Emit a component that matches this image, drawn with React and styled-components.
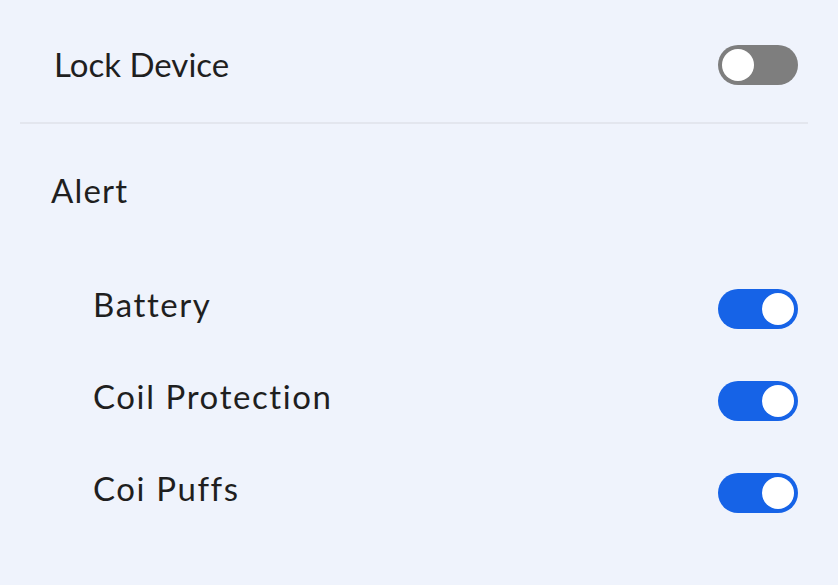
import React, { useState } from "react";
import styled, { createGlobalStyle } from "styled-components";

const GlobalStyle = createGlobalStyle`
  html, body {
    margin: 0;
    padding: 0;
    background: #eff3fc;
  }
  body {
    font-family: "Lato", "Noto Sans", sans-serif;
    color: #1f1f1f;
  }
`;

const Page = styled.div`
  padding: 20px 30px 0 20px;
  min-height: 565px;
`;

const Row = styled.div`
  display: flex;
  align-items: center;
  justify-content: space-between;
  height: ${(p) => p.$height || 92}px;
  padding-left: ${(p) => p.$indent || 0}px;
  padding-right: 10px;
`;

const Label = styled.span`
  font-size: 33px;
  letter-spacing: ${(p) => p.$spacing || 0}px;
  line-height: 1.2;
  margin-bottom: ${(p) => p.$lift || 0}px;
`;

const Divider = styled.hr`
  margin: 12px 0 0;
  border: none;
  height: 2px;
  background: #e3e6ee;
`;

const SectionTitle = styled.div`
  display: flex;
  align-items: center;
  height: 132px;
  padding-left: 31px;
  font-size: 33px;
  letter-spacing: 1.2px;
`;

const List = styled.div`
  padding-top: 7px;
`;

const Track = styled.button`
  position: relative;
  width: 80px;
  height: 40px;
  border: none;
  border-radius: 20px;
  padding: 0;
  cursor: pointer;
  background: ${(p) => (p.$on ? "#1663e7" : "#7e7e7e")};
  flex-shrink: 0;
`;

const Knob = styled.span`
  position: absolute;
  top: 4px;
  left: ${(p) => (p.$on ? 44 : 4)}px;
  width: 32px;
  height: 32px;
  border-radius: 50%;
  background: #fff;
`;

const Toggle = ({ on, onChange }) => (
  <Track $on={on} onClick={onChange}>
    <Knob $on={on} />
  </Track>
);

export default function App() {
  const [lock, setLock] = useState(false);
  const [alerts, setAlerts] = useState({
    battery: true,
    coil: true,
    puffs: true,
  });

  const flip = (key) => setAlerts({ ...alerts, [key]: !alerts[key] });

  const items = [
    { key: "battery", label: "Battery" },
    { key: "coil", label: "Coil Protection" },
    { key: "puffs", label: "Coi Puffs" },
  ];

  return (
    <>
      <GlobalStyle />
      <Page>
        <Row $height={90} $indent={34}>
          <Label>Lock Device</Label>
          <Toggle on={lock} onChange={() => setLock(!lock)} />
        </Row>
        <Divider />
        <SectionTitle>Alert</SectionTitle>
        <List>
          {items.map((item) => (
            <Row key={item.key} $indent={73}>
              <Label $spacing={1.6} $lift={8}>
                {item.label}
              </Label>
              <Toggle on={alerts[item.key]} onChange={() => flip(item.key)} />
            </Row>
          ))}
        </List>
      </Page>
    </>
  );
}
